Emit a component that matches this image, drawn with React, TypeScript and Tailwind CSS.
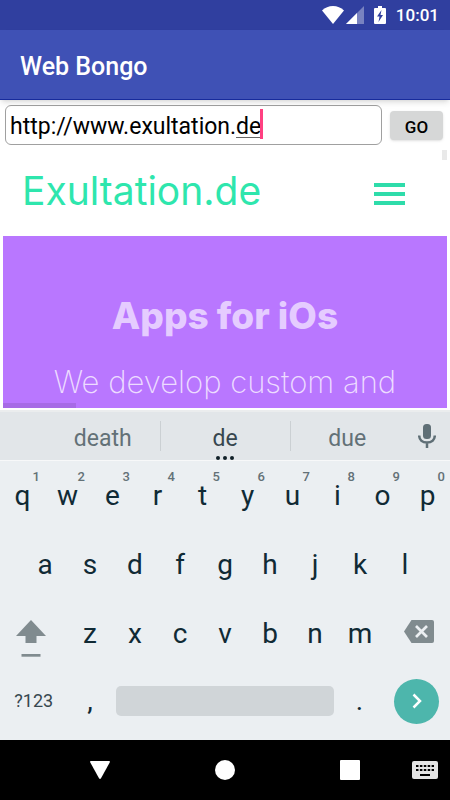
import { useState } from 'react';

const topRow = ['q', 'w', 'e', 'r', 't', 'y', 'u', 'i', 'o', 'p'];
const middleRow = ['a', 's', 'd', 'f', 'g', 'h', 'j', 'k', 'l'];
const bottomRow = ['z', 'x', 'c', 'v', 'b', 'n', 'm'];

function StatusBar() {
    return (
        <div className="flex h-[30px] shrink-0 items-center justify-end bg-[#303f9f] pr-[11px] text-white">
            <svg className="mr-0.5" width="22" height="18" viewBox="0 0 22 18" fill="currentColor" aria-hidden="true">
                <path d="M11 18 0 4.4C3 1.6 6.800 0 11 0s8 1.600 11 4.400z" />
            </svg>
            <svg className="mr-2.5" width="18" height="18" viewBox="0 0 18 18" fill="currentColor" aria-hidden="true">
                <path d="M0 18 18 0v18z" opacity="0.35" />
                <path d="M0 18 11 7v11z" />
            </svg>
            <svg className="mr-2.5" width="12" height="18" viewBox="0 0 12 18" aria-hidden="true">
                <path fill="currentColor" d="M4 0h4v2h3a1 1 0 0 1 1 1v14a1 1 0 0 1-1 1H1a1 1 0 0 1-1-1V3a1 1 0 0 1 1-1h3z" />
                <path fill="#303f9f" d="M7.500 4 3 10.500h2.500L4.500 16 9 9H6.500z" />
            </svg>
            <span className="text-[17px] leading-6 font-medium">10:01</span>
        </div>
    );
}

function AddressBar() {
    const [url, setUrl] = useState('http://www.exultation.de');

    return (
        <form className="flex h-[50px] shrink-0 items-center gap-2 pr-[7px] pl-[5px]" onSubmit={(e) => e.preventDefault()}>
            <div className="relative min-w-0 flex-1">
                <input
                    type="text"
                    aria-label="Address"
                    value={url}
                    onChange={(e) => setUrl(e.target.value)}
                    className="block h-10 w-full rounded-md border border-[#a0a0a0] bg-white px-1 pt-0.5 text-[23px] text-black caret-[#ff4081] outline-none"
                />
                {/* Spell check underline and cursor */}
                <span className="absolute bottom-[7px] left-[231px] h-px w-6 bg-[#666]" />
                <span className="absolute top-1 left-[255px] h-[30px] w-[3px] bg-[#ff4081]" />
            </div>
            <button
                type="submit"
                className="h-[29px] w-[53px] rounded-sm bg-[#d6d7d7] pt-1 text-[17px] leading-6 font-medium text-black shadow-sm"
            >
                GO
            </button>
        </form>
    );
}

function WebPage() {
    return (
        <main className="relative flex min-h-0 flex-1 flex-col overflow-hidden px-[3px] pb-[2px] font-['Inter',sans-serif]">
            <header className="flex h-[86px] shrink-0 items-center justify-between pr-[42px] pb-1 pl-[19px]">
                <h1 className="text-[39px] leading-[48px] font-normal text-[#2ee6ad]">Exultation.de</h1>
                <button type="button" aria-label="Menu" className="flex w-[31px] flex-col gap-[5px] pt-1.5">
                    <span className="h-1 w-full bg-[#2edcaa]" />
                    <span className="h-1 w-full bg-[#2edcaa]" />
                    <span className="h-1 w-full bg-[#2edcaa]" />
                </button>
            </header>
            <section className="flex min-h-0 flex-1 flex-col items-center overflow-hidden bg-[#b977ff] pt-14 text-center">
                <h2 className="text-[37px] leading-[48px] font-extrabold text-[#e5ccff]">Apps for iOs</h2>
                <p className="pt-5 text-[31px] leading-[44px] font-extralight whitespace-nowrap text-[#eddcff]">We develop custom and</p>
            </section>
            {/* Scroll bars */}
            <span className="absolute top-0 right-[3px] h-[10px] w-[5px] bg-[#e9e9e9]" />
            <span className="absolute bottom-[2px] left-[3px] h-[5px] w-[73px] bg-[#a76be6]" />
        </main>
    );
}

function Suggestions() {
    return (
        <div className="flex h-[51px] shrink-0 items-center border-t-2 border-b border-t-[#ebedee] border-b-[#f7f8f9] bg-[#e2e6e9] pl-[46px] text-[23px] text-[#637177]">
            <button type="button" className="h-full flex-1 pt-1.5">death</button>
            <span className="h-[30px] w-px bg-[#cbd0d3]" />
            <button type="button" className="relative h-full w-[129px] pt-1.5 text-[#37474f]">
                de
                <span className="absolute inset-x-0 bottom-0 flex justify-center gap-[3px]">
                    <span className="size-1 rounded-full bg-[#102027]" />
                    <span className="size-1 rounded-full bg-[#102027]" />
                    <span className="size-1 rounded-full bg-[#102027]" />
                </span>
            </button>
            <span className="h-[30px] w-px bg-[#cbd0d3]" />
            <button type="button" className="h-full flex-1 pt-1.5">due</button>
            <button type="button" aria-label="Voice input" className="flex w-[46px] justify-center">
                <svg width="18" height="24" viewBox="0 0 18 24" aria-hidden="true">
                    <rect x="5" y="0" width="8" height="15" rx="3.500" fill="#5f6f76" />
                    <path d="M1.200 11.500C1.200 16 4.500 18.500 9 18.500s7.800-2.500 7.800-7M9 18.500V24" fill="none" stroke="#5f6f76" strokeWidth="2.500" />
                </svg>
            </button>
        </div>
    );
}

function Key({ label, hint }: { label: string; hint?: number }) {
    return (
        <button type="button" className="relative h-full w-1/10 text-[28px] leading-8 text-[#102a35]">
            {label}
            {hint !== undefined && (
                <span className="absolute top-2 right-[5px] text-[13px] leading-4 font-medium text-[#637177]">{hint}</span>
            )}
        </button>
    );
}

function Keyboard() {
    return (
        <div className="shrink-0 bg-[#ebeff2] pb-1.5">
            <div className="flex h-[69px]">
                {topRow.map((k, i) => <Key key={k} label={k} hint={(i + 1) % 10} />)}
            </div>
            <div className="flex h-[69px] justify-center">
                {middleRow.map((k) => <Key key={k} label={k} />)}
            </div>
            <div className="flex h-[69px]">
                <button type="button" aria-label="Shift" className="flex w-3/20 items-center pt-2 pl-4">
                    <svg width="30" height="38" viewBox="0 0 30 38" fill="#808b8f" aria-hidden="true">
                        <path d="M15 1 30 17H20.500v7h-11v-7H0z" />
                        <path d="M5.500 35h19v2.700h-19z" />
                    </svg>
                </button>
                {bottomRow.map((k) => <Key key={k} label={k} />)}
                <button type="button" aria-label="Backspace" className="flex w-3/20 items-center justify-end pr-4 pb-1">
                    <svg width="30" height="23" viewBox="0 0 30 23" aria-hidden="true">
                        <path d="M7.500 0H28a2 2 0 0 1 2 2v19a2 2 0 0 1-2 2H7.500L0 11.500z" fill="#808b8f" />
                        <path d="m12 6 11 11m0-11L12 17" stroke="#ebeff2" strokeWidth="2.700" fill="none" />
                    </svg>
                </button>
            </div>
            <div className="flex h-[66px] items-center">
                <button type="button" className="h-full w-3/20 pb-0.5 text-[18px] text-[#37474f]">?123</button>
                <Key label="," />
                <button type="button" aria-label="Space" className="mx-[3px] h-[30px] flex-1 rounded-[5px] bg-[#d0d5d8]" />
                <Key label="." />
                <button type="button" aria-label="Enter" className="mr-[11px] ml-3 flex size-[45px] items-center justify-center rounded-full bg-[#4db6ac]">
                    <svg width="10" height="16" viewBox="0 0 10 16" fill="none" stroke="#fff" strokeWidth="2.500" aria-hidden="true">
                        <path d="m1.500 1.500 6.500 6.500-6.500 6.500" />
                    </svg>
                </button>
            </div>
        </div>
    );
}

function NavigationBar() {
    return (
        <nav className="relative flex h-[60px] shrink-0 items-center justify-center bg-black">
            <button type="button" aria-label="Back" className="flex w-[125px] justify-center">
                <svg width="20" height="18" viewBox="0 0 20 18" fill="#fff" aria-hidden="true">
                    <path d="M1 0h18q1.500 0 .7 1.500l-8.700 15.800q-1 1.400-2 0L.3 1.500Q-.5 0 1 0z" />
                </svg>
            </button>
            <button type="button" aria-label="Home" className="flex w-[125px] justify-center">
                <span className="size-5 rounded-full bg-white" />
            </button>
            <button type="button" aria-label="Recent apps" className="flex w-[125px] justify-center">
                <span className="size-5 rounded-[1px] bg-white" />
            </button>
            <button type="button" aria-label="Switch keyboard" className="absolute right-3">
                <svg width="26" height="18" viewBox="0 0 26 18" aria-hidden="true">
                    <rect width="26" height="18" rx="2" fill="#e4e4e4" />
                    <path d="M4 5h18M4 9h18" stroke="#000" strokeWidth="2" strokeDasharray="2.500 1.400" />
                    <path d="M8 14h10" stroke="#000" strokeWidth="2" />
                </svg>
            </button>
        </nav>
    );
}

export default function App() {
    return (
        <div className="flex h-screen flex-col overflow-hidden bg-white font-['Roboto',sans-serif]">
            <StatusBar />
            <div className="z-10 flex h-[70px] shrink-0 items-center border-b border-[#172b9c] bg-[#3f51b5] px-5 pt-1 shadow-md">
                <span className="text-[25px] leading-8 font-medium text-white">Web Bongo</span>
            </div>
            <AddressBar />
            <WebPage />
            <Suggestions />
            <Keyboard />
            <NavigationBar />
        </div>
    );
}
